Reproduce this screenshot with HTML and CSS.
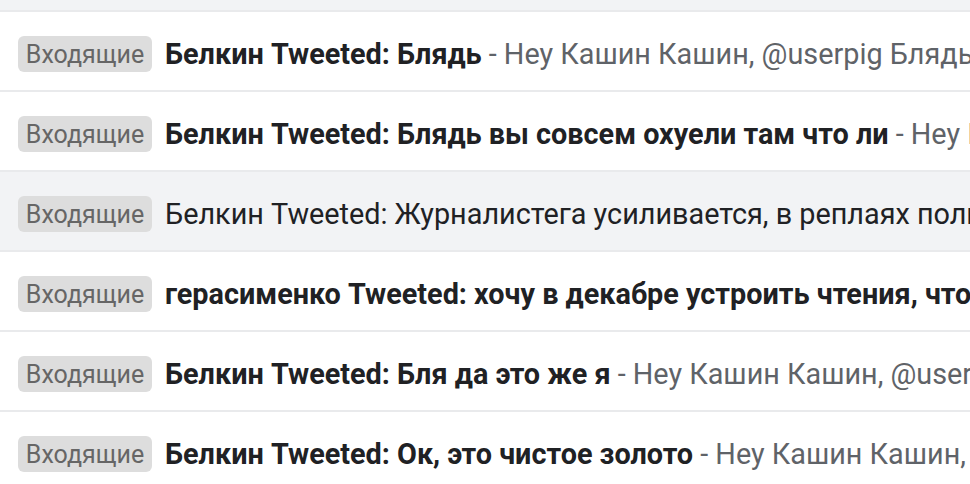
FILE: index.html
```html
<!DOCTYPE html>
<html lang="ru">
<head>
<meta charset="utf-8">
<link rel="stylesheet" href="styles.css">
</head>
<body>
<div class="top"></div>
<div class="list">
  <div class="row unread">
    <span class="badge">Входящие</span>
    <span class="line"><span class="subj">Белкин Tweeted: Блядь</span><span class="snip"> - Hey Кашин Кашин, @userpig Блядь вы совсем охуели там что ли</span></span>
  </div>
  <div class="row unread">
    <span class="badge">Входящие</span>
    <span class="line"><span class="subj">Белкин Tweeted: Блядь вы совсем охуели там что ли</span><span class="snip"> - Hey Кашин Кашин, @userpig</span></span>
  </div>
  <div class="row read">
    <span class="badge">Входящие</span>
    <span class="line"><span class="subj">Белкин Tweeted: Журналистега усиливается, в реплаях пользователи</span></span>
  </div>
  <div class="row unread">
    <span class="badge">Входящие</span>
    <span class="line"><span class="subj">герасименко Tweeted: хочу в декабре устроить чтения, что скажете</span></span>
  </div>
  <div class="row unread">
    <span class="badge">Входящие</span>
    <span class="line"><span class="subj">Белкин Tweeted: Бля да это же я</span><span class="snip"> - Hey Кашин Кашин, @userpig</span></span>
  </div>
  <div class="row unread">
    <span class="badge">Входящие</span>
    <span class="line"><span class="subj">Белкин Tweeted: Ок, это чистое золото</span><span class="snip"> - Hey Кашин Кашин, @userpig</span></span>
  </div>
</div>
</body>
</html>
```

FILE: styles.css
```css
html, body {
  margin: 0;
  padding: 0;
  background: #ffffff;
  overflow: hidden;
  font-family: Roboto, "Noto Sans", "Liberation Sans", sans-serif;
}

.top {
  height: 10px;
  background: #f2f3f5;
}

.list {
  display: flex;
  flex-direction: column;
}

.row {
  display: flex;
  align-items: center;
  gap: 13px;
  height: 78px;
  box-sizing: content-box;
  border-top: 2px solid #e9eaec;
  padding: 0 0 0 18px;
  white-space: nowrap;
  overflow: hidden;
}

.row.read {
  background: #f2f3f5;
}

.badge {
  flex: none;
  display: inline-flex;
  align-items: center;
  justify-content: center;
  height: 36px;
  width: 134px;
  margin-top: 6px;
  box-sizing: border-box;
  background: #dddddd;
  color: #666666;
  border-radius: 6px;
  font-size: 25px;
}

.line {
  margin-top: 6px;
  white-space: nowrap;
  overflow: hidden;
  font-size: 28.8px;
}

.subj {
  color: #202124;
}

.unread .subj {
  font-weight: 700;
}

.snip {
  color: #5f6368;
}
```
